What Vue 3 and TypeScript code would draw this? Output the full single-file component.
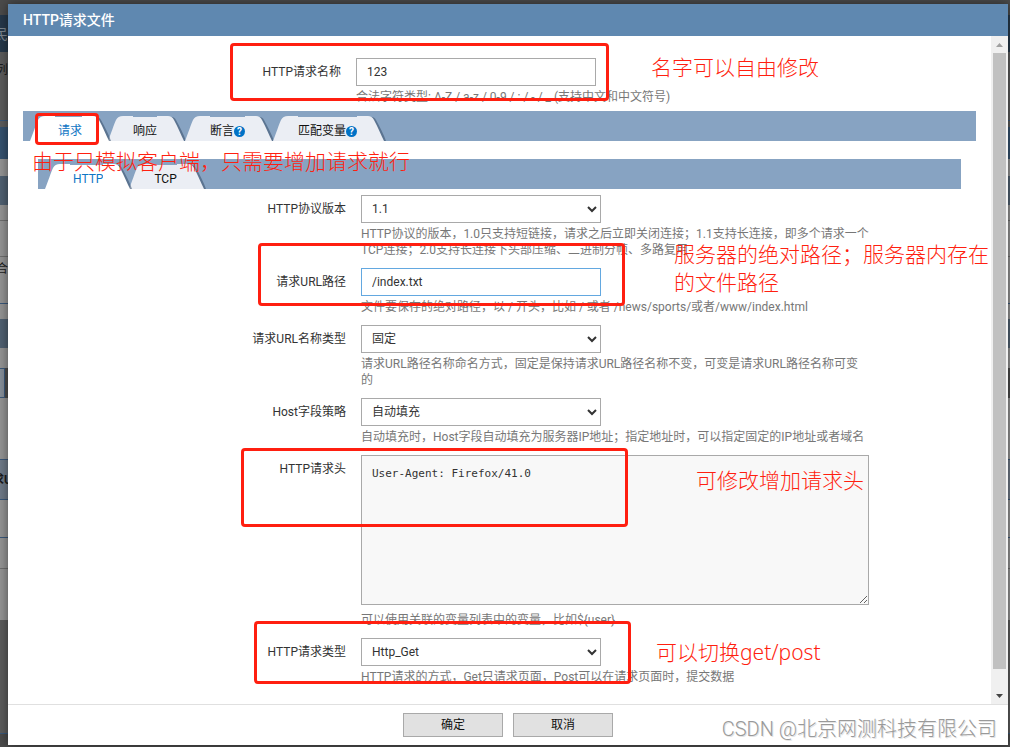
<script setup lang="ts">
import { ref } from 'vue'

interface Tab {
  id: string
  label: string
  help?: boolean
}

interface Band {
  height: number
  tone: string
  text?: string
}

const mainTabs: Tab[] = [
  { id: 'request', label: '请求' },
  { id: 'response', label: '响应' },
  { id: 'assert', label: '断言', help: true },
  { id: 'variable', label: '匹配变量', help: true },
]
const protocolTabs: Tab[] = [
  { id: 'http', label: 'HTTP' },
  { id: 'tcp', label: 'TCP' },
]

const activeMain = ref('request')
const activeProtocol = ref('http')

const name = ref('123')
const version = ref('1.1')
const path = ref('/index.txt')
const nameType = ref('固定')
const hostPolicy = ref('自动填充')
const headers = ref('User-Agent: Firefox/41.0')
const method = ref('Http_Get')

const bands: Band[] = [
  { height: 15, tone: 'charcoal' },
  { height: 37, tone: 'navy', text: '民' },
  { height: 69, tone: 'dim ruled upper', text: '列' },
  { height: 6, tone: 'dim' },
  { height: 32, tone: 'blue' },
  { height: 17, tone: 'grey' },
  { height: 29, tone: 'slate' },
  { height: 16, tone: 'grey lined' },
  { height: 36, tone: 'grey lined' },
  { height: 47, tone: 'grey ruled near-top', text: '合' },
  { height: 15, tone: 'grey' },
  { height: 29, tone: 'slate' },
  { height: 20, tone: 'grey' },
  { height: 30, tone: 'grey boxed' },
  { height: 62, tone: 'grey ruled' },
  { height: 40, tone: 'steel ruled', text: '求U' },
  { height: 38, tone: 'grey ruled' },
  { height: 31, tone: 'grey lined' },
  { height: 51, tone: 'grey' },
  { height: 114, tone: 'dim ruled' },
  { height: 13, tone: 'charcoal' },
]
</script>

<template>
  <div class="screen">
    <div class="backdrop" aria-hidden="true">
      <div
        v-for="(band, i) in bands"
        :key="i"
        class="band"
        :class="band.tone"
        :style="{ height: band.height + 'px' }"
      >
        <span v-if="band.text" class="fragment">{{ band.text }}</span>
      </div>
    </div>

    <section class="dialog" role="dialog" aria-labelledby="dialog-title">
      <header class="title-bar">
        <h1 id="dialog-title">HTTP请求文件</h1>
      </header>

      <div class="body">
        <div class="content">
          <div class="row name-row">
            <label for="name">HTTP请求名称</label>
            <div class="field">
              <input id="name" v-model="name" type="text" class="control" />
              <p class="hint">合法字符类型: A-Z / a-z / 0-9 / : / - / _ (支持中文和中文符号)</p>
            </div>
          </div>

          <div class="panel">
            <nav class="tab-bar">
              <button
                v-for="tab in mainTabs"
                :key="tab.id"
                type="button"
                class="tab"
                :class="{ active: tab.id === activeMain }"
                @click="activeMain = tab.id"
              >
                <svg class="cap left" viewBox="0 0 25 25" aria-hidden="true">
                  <path d="M0 25C3 18 6 8 8 4Q10 0 15 0H25V25Z" />
                </svg>
                <span class="tab-label">{{ tab.label }}<i v-if="tab.help" class="help">?</i></span>
                <svg class="cap right" viewBox="0 0 30 25" aria-hidden="true">
                  <path class="shade" d="M10 1Q17 0 19 4C23 11 27 19 29 25H20Z" />
                  <path d="M0 0H11Q15 0 17 4C21 11 24 19 27 25H0Z" />
                </svg>
              </button>
            </nav>

            <div class="sub-panel">
              <nav class="tab-bar">
                <button
                  v-for="tab in protocolTabs"
                  :key="tab.id"
                  type="button"
                  class="tab"
                  :class="{ active: tab.id === activeProtocol }"
                  @click="activeProtocol = tab.id"
                >
                  <svg class="cap left" viewBox="0 0 25 25" aria-hidden="true">
                    <path d="M0 25C3 18 6 8 8 4Q10 0 15 0H25V25Z" />
                  </svg>
                  <span class="tab-label">{{ tab.label }}</span>
                  <svg class="cap right" viewBox="0 0 30 25" aria-hidden="true">
                    <path class="shade" d="M10 1Q17 0 19 4C23 11 27 19 29 25H20Z" />
                    <path d="M0 0H11Q15 0 17 4C21 11 24 19 27 25H0Z" />
                  </svg>
                </button>
              </nav>

              <form class="form" @submit.prevent>
                <div class="row">
                  <label for="version">HTTP协议版本</label>
                  <div class="field">
                    <select id="version" v-model="version" class="control">
                      <option>1.0</option>
                      <option>1.1</option>
                      <option>2.0</option>
                    </select>
                    <p class="hint">HTTP协议的版本，1.0只支持短链接，请求之后立即关闭连接；1.1支持长连接，即多个请求一个TCP连接；2.0支持长连接下头部压缩、二进制分帧、多路复用</p>
                  </div>
                </div>
                <div class="row">
                  <label for="path">请求URL路径</label>
                  <div class="field">
                    <input id="path" v-model="path" type="text" class="control focused" />
                    <p class="hint">文件要保存的绝对路径，以 / 开头，比如 / 或者 /news/sports/或者/www/index.html</p>
                  </div>
                </div>
                <div class="row">
                  <label for="name-type">请求URL名称类型</label>
                  <div class="field">
                    <select id="name-type" v-model="nameType" class="control">
                      <option>固定</option>
                      <option>可变</option>
                    </select>
                    <p class="hint">请求URL路径名称命名方式，固定是保持请求URL路径名称不变，可变是请求URL路径名称可变的</p>
                  </div>
                </div>
                <div class="row">
                  <label for="host-policy">Host字段策略</label>
                  <div class="field">
                    <select id="host-policy" v-model="hostPolicy" class="control">
                      <option>自动填充</option>
                      <option>指定地址</option>
                    </select>
                    <p class="hint">自动填充时，Host字段自动填充为服务器IP地址；指定地址时，可以指定固定的IP地址或者域名</p>
                  </div>
                </div>
                <div class="row">
                  <label for="headers">HTTP请求头</label>
                  <div class="field">
                    <textarea id="headers" v-model="headers" class="headers" spellcheck="false"></textarea>
                    <p class="hint">可以使用关联的变量列表中的变量，比如${user}</p>
                  </div>
                </div>
                <div class="row">
                  <label for="method">HTTP请求类型</label>
                  <div class="field">
                    <select id="method" v-model="method" class="control">
                      <option>Http_Get</option>
                      <option>Http_Post</option>
                    </select>
                    <p class="hint">HTTP请求的方式，Get只请求页面，Post可以在请求页面时，提交数据</p>
                  </div>
                </div>
              </form>
            </div>
          </div>
        </div>

        <div class="scrollbar" aria-hidden="true">
          <svg class="arrow up" viewBox="0 0 17 17"><path d="M5 11L8.500 7L12 11Z" /></svg>
          <div class="thumb"></div>
          <svg class="arrow down" viewBox="0 0 17 17"><path d="M5 7L8.500 11L12 7Z" /></svg>
        </div>
      </div>

      <footer class="actions">
        <button type="button" class="action">确定</button>
        <button type="button" class="action">取消</button>
      </footer>
    </section>

    <div class="mark mark-name"></div>
    <div class="mark mark-tab"></div>
    <div class="mark mark-path"></div>
    <div class="mark mark-headers"></div>
    <div class="mark mark-method"></div>
    <p class="note note-name">名字可以自由修改</p>
    <p class="note note-tab">由于只模拟客户端，只需要增加请求就行</p>
    <p class="note note-path">服务器的绝对路径；服务器内存在的文件路径</p>
    <p class="note note-headers">可修改增加请求头</p>
    <p class="note note-method">可以切换get/post</p>
    <p class="watermark">CSDN @北京网测科技有限公司</p>
  </div>
</template>

<style>
html,
body {
  height: 100%;
  overflow: hidden;
}
</style>

<style scoped>
.screen,
.screen * {
  box-sizing: border-box;
}
.screen {
  position: relative;
  display: flex;
  height: 100vh;
  padding: 4px 2px 2px 8px;
  overflow: hidden;
  background: #4b4b4b;
  color: #333;
  font: 12px/16px Roboto, 'Noto Sans CJK SC', sans-serif;
}
.screen p,
.screen h1 {
  margin: 0;
}

.backdrop {
  position: absolute;
  inset: 0;
}
.band {
  display: flex;
  align-items: center;
  overflow: hidden;
}
.upper {
  align-items: flex-start;
  padding-top: 10px;
}
.near-top {
  align-items: flex-start;
  padding-top: 4px;
}
.fragment {
  width: 8px;
  overflow: hidden;
  display: flex;
  justify-content: flex-end;
  color: #1c1c1c;
  white-space: nowrap;
}
.charcoal { background: #4b4b4b; }
.navy { background: #26384a; }
.navy .fragment {
  color: #7d8790;
  font-size: 14px;
}
.dim { background: #5c5c5c; }
.blue { background: #35526f; }
.grey { background: #949494; }
.slate { background: #506172; }
.steel {
  background: #6f7a88;
  font-weight: 700;
}
.steel .fragment {
  width: 12px;
}
.ruled { border-bottom: 1px solid #3a587a; }
.lined { border-bottom: 1px solid #6e6e6e; }
.boxed {
  width: 5px;
  border: 1px solid #3a587a;
  border-left: 0;
  background: #858e99;
}

.dialog {
  position: relative;
  isolation: isolate;
  display: flex;
  flex: 1;
  flex-direction: column;
  min-width: 0;
  background: #fff;
  box-shadow: 0 0 10px rgba(0, 0, 0, 0.5);
}
.title-bar {
  display: flex;
  align-items: center;
  height: 32px;
  flex: none;
  padding: 0 15px;
  background: #5f88b0;
  color: #fff;
}
.title-bar h1 {
  font-size: 14px;
  font-weight: 500;
}
.body {
  display: flex;
  flex: 1;
  min-height: 0;
}
.content {
  flex: 1;
  min-width: 0;
  padding: 22px 15px 0;
  overflow: hidden;
}
.row {
  display: grid;
  grid-template-columns: 308px minmax(0, 508px);
  column-gap: 15px;
}
.row > label {
  line-height: 28px;
  text-align: right;
}
.name-row {
  grid-template-columns: 318px minmax(0, 508px);
}
.control {
  display: block;
  width: 240px;
  height: 28px;
  margin: 0;
  padding: 0 10px;
  border: 1px solid #a9a9a9;
  border-radius: 0;
  outline: 0;
  background-color: #fff;
  color: #333;
  font: inherit;
}
select.control {
  padding: 0 1px 0 6px;
}
.focused {
  border-color: #63a8e0;
}
.hint {
  padding-top: 3px;
  color: #777;
}
.headers {
  display: block;
  width: 100%;
  height: 150px;
  margin: 0 0 4px;
  padding: 10px;
  border: 1px solid #a9a9a9;
  outline: 0;
  background: #f8f8f8;
  color: #333;
  font: 11px/16px 'DejaVu Sans Mono', 'Liberation Mono', monospace;
  resize: both;
}

.panel {
  margin-top: 6px;
}
.sub-panel {
  padding: 18px 15px 0;
}
.tab-bar {
  display: flex;
  height: 30px;
  padding: 5px 7px 0;
  background: #87a3c2;
}
.tab {
  position: relative;
  display: flex;
  height: 25px;
  margin: 0 -2px 0 0;
  padding: 0;
  border: 0;
  background: none;
  color: #111;
  font: inherit;
  cursor: pointer;
}
.cap {
  flex: none;
  height: 25px;
  fill: #ebeef4;
}
.cap.left {
  width: 25px;
}
.cap.right {
  width: 30px;
}
.cap .shade {
  fill: #3d5570;
  fill-opacity: 0.6;
}
.tab-label {
  display: flex;
  align-items: center;
  height: 24px;
  margin-top: 1px;
  padding-top: 4px;
  background: #ebeef4;
}
.tab.active {
  z-index: 1;
  margin-right: -4px;
  color: #0f76c4;
}
.tab.active .cap {
  fill: #fff;
}
.tab.active .tab-label {
  padding-left: 3px;
  background: #fff;
}
.help {
  width: 11px;
  height: 11px;
  border-radius: 50%;
  background: #0072c6;
  color: #fff;
  font-size: 10px;
  font-style: normal;
  font-weight: 700;
  line-height: 11px;
  text-align: center;
}
.form {
  display: flex;
  flex-direction: column;
  gap: 10px;
  padding-top: 6px;
}

.scrollbar {
  display: flex;
  flex: none;
  flex-direction: column;
  width: 17px;
  background: #f0f0f0;
}
.arrow {
  flex: none;
  width: 17px;
  height: 17px;
}
.up { fill: #a0a0a0; }
.down { fill: #444; }
.thumb {
  flex: 1;
  margin: 0 2px 18px;
  background: #c1c1c1;
}

.actions {
  display: flex;
  flex: none;
  justify-content: center;
  gap: 10px;
  height: 41px;
  padding-top: 8px;
  border-top: 1px solid #e0e0e0;
}
.action {
  width: 100px;
  height: 24px;
  padding: 0;
  border: 1px solid #a9a9a9;
  border-radius: 0;
  background: #e1e1e1;
  color: #111;
  font: inherit;
}

.mark {
  position: absolute;
  border: 3px solid #ff1f10;
  border-radius: 4px;
  pointer-events: none;
}
.mark-name { left: 230px; top: 43px; width: 379px; height: 58px; }
.mark-tab { left: 35px; top: 113px; width: 64px; height: 32px; }
.mark-path { left: 258px; top: 243px; width: 367px; height: 63px; }
.mark-headers { left: 241px; top: 448px; width: 387px; height: 79px; }
.mark-method { left: 254px; top: 621px; width: 377px; height: 63px; }

.note {
  position: absolute;
  color: #ff1f10;
  font: 300 21px/28px 'Noto Sans', 'Noto Sans CJK SC', sans-serif;
  pointer-events: none;
}
.note-name { left: 651px; top: 53px; }
.note-tab { left: 32px; top: 147px; }
.note-path { left: 674px; top: 240px; width: 316px; }
.note-headers { left: 696px; top: 466px; }
.note-method { left: 656px; top: 638px; }
.watermark {
  position: absolute;
  right: 13px;
  bottom: 4px;
  color: #999;
  font: 300 20px/28px Roboto, 'Noto Sans CJK SC', sans-serif;
  text-shadow: 1px 1px 0 #e4e4e4;
  pointer-events: none;
}
</style>
